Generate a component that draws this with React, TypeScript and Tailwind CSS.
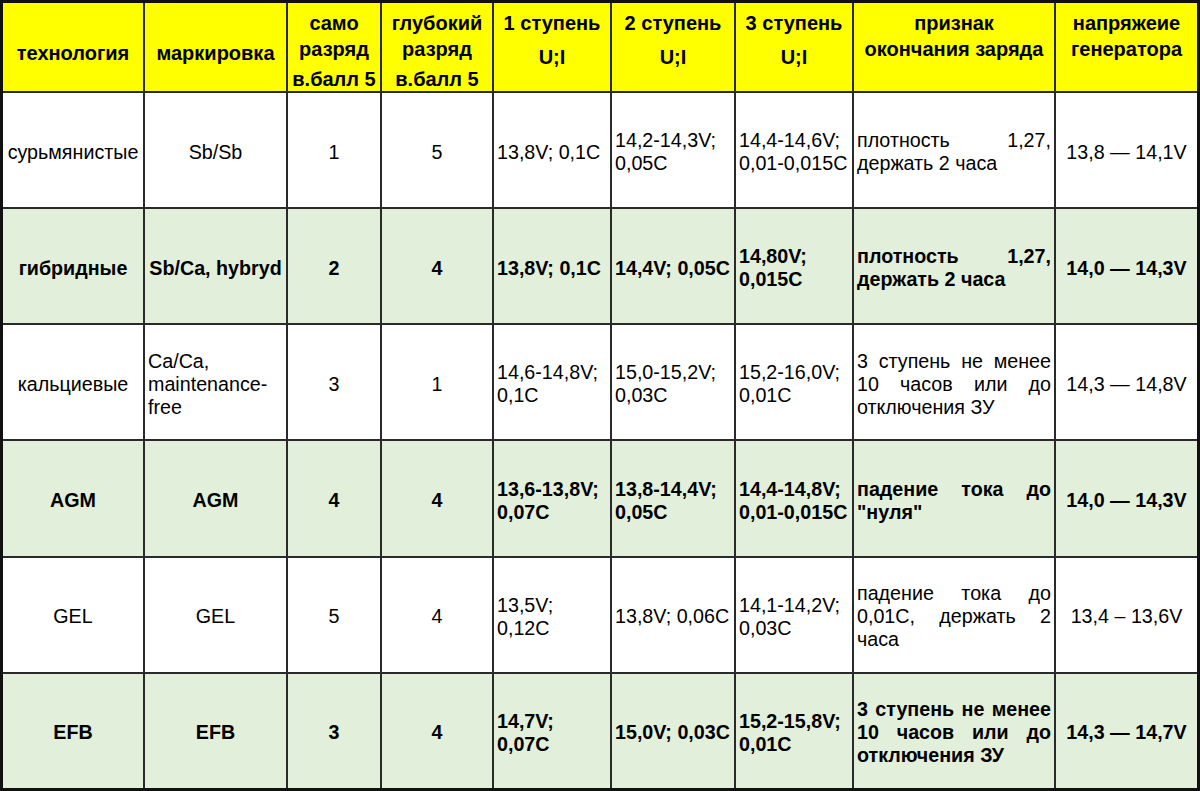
import React from "react";

type Align = "c" | "l" | "j";

const aligns: Align[] = ["c", "c", "c", "c", "l", "l", "l", "j", "c"];

const rows: { green: boolean; cells: string[]; special?: Record<number, Align> }[] = [
  {
    green: false,
    cells: ["сурьмянистые", "Sb/Sb", "1", "5", "13,8V; 0,1C", "14,2-14,3V; 0,05C", "14,4-14,6V; 0,01-0,015C", "плотность 1,27, держать 2 часа", "13,8 — 14,1V"],
  },
  {
    green: true,
    cells: ["гибридные", "Sb/Ca, hybryd", "2", "4", "13,8V; 0,1C", "14,4V; 0,05C", "14,80V; 0,015C", "плотность 1,27, держать 2 часа", "14,0 — 14,3V"],
  },
  {
    green: false,
    cells: ["кальциевые", "Ca/Ca, maintenance-free", "3", "1", "14,6-14,8V; 0,1C", "15,0-15,2V; 0,03C", "15,2-16,0V; 0,01C", "3 ступень не менее 10 часов или до отключения ЗУ", "14,3 — 14,8V"],
    special: { 1: "l" },
  },
  {
    green: true,
    cells: ["AGM", "AGM", "4", "4", "13,6-13,8V; 0,07C", "13,8-14,4V; 0,05C", "14,4-14,8V; 0,01-0,015C", "падение тока до \"нуля\"", "14,0 — 14,3V"],
  },
  {
    green: false,
    cells: ["GEL", "GEL", "5", "4", "13,5V; 0,12C", "13,8V; 0,06C", "14,1-14,2V; 0,03C", "падение тока до 0,01С, держать 2 часа", "13,4 – 13,6V"],
  },
  {
    green: true,
    cells: ["EFB", "EFB", "3", "4", "14,7V; 0,07C", "15,0V; 0,03C", "15,2-15,8V; 0,01C", "3 ступень не менее 10 часов или до отключения ЗУ", "14,3 — 14,7V"],
  },
];

function HeaderCell({ lines, gaps, pt }: { lines: string[]; gaps?: number[]; pt: string }) {
  return (
    <div className={`bg-[#ffff00] flex flex-col items-center text-center font-bold text-[20px] ${pt}`}>
      {lines.map((l, i) => (
        <div key={i} className="leading-[26px] whitespace-nowrap" style={gaps && gaps[i] ? { marginTop: gaps[i] } : undefined}>
          {l}
        </div>
      ))}
    </div>
  );
}

export default function App() {
  return (
    <div
      className="w-[1200px] h-[791px] bg-white text-black text-[19.7px]"
      style={{ fontFamily: '"Liberation Sans", Arial, sans-serif' }}
    >
      <div className="w-full h-full border-[3px] border-[#111] bg-[#2a2a2a] grid grid-cols-[140px_141px_92px_110px_116px_122px_116px_200px_1fr] grid-rows-[88px_repeat(6,1fr)] gap-[2px]">
        <HeaderCell lines={["технология"]} pt="pt-[37px]" />
        <HeaderCell lines={["маркировка"]} pt="pt-[37px]" />
        <HeaderCell lines={["само", "разряд", "в.балл 5"]} gaps={[0, 0, 4]} pt="pt-[7px]" />
        <HeaderCell lines={["глубокий", "разряд", "в.балл 5"]} gaps={[0, 0, 4]} pt="pt-[7px]" />
        <HeaderCell lines={["1 ступень", "U;I"]} gaps={[0, 8]} pt="pt-[7px]" />
        <HeaderCell lines={["2 ступень", "U;I"]} gaps={[0, 8]} pt="pt-[7px]" />
        <HeaderCell lines={["3 ступень", "U;I"]} gaps={[0, 8]} pt="pt-[7px]" />
        <HeaderCell lines={["признак", "окончания заряда"]} pt="pt-[7px]" />
        <HeaderCell lines={["напряжеие", "генератора"]} pt="pt-[7px]" />
        {rows.map((r, ri) =>
          r.cells.map((c, ci) => {
            const a = (r.special && r.special[ci]) || aligns[ci];
            const alignCls =
              a === "c" ? "justify-center text-center" : a === "j" ? "text-justify" : "text-left";
            return (
              <div
                key={`${ri}-${ci}`}
                className={`${r.green ? "bg-[#e2efda] font-bold" : "bg-white"} flex items-center px-[3px] pt-[4px] leading-[23px] ${alignCls}`}
              >
                <div className={a === "c" ? "" : "w-full"}>{c}</div>
              </div>
            );
          })
        )}
      </div>
    </div>
  );
}
